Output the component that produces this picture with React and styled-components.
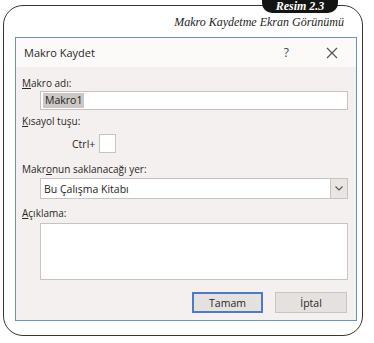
import React from "react";
import styled, { createGlobalStyle } from "styled-components";

const Global = createGlobalStyle`
  html, body { margin: 0; padding: 0; background: #ffffff; }
  body { width: 374px; height: 343px; overflow: hidden; }
  * { box-sizing: border-box; }
`;

const Page = styled.div`
  width: 374px;
  height: 343px;
  padding: 5px 0 0 3px;
  background: #ffffff;
`;

const Frame = styled.div`
  position: relative;
  width: 360px;
  height: 331px;
  border: 1.3px solid #363636;
  border-radius: 20px;
  padding-top: 9px;
`;

const Badge = styled.div`
  position: absolute;
  top: -17px;
  left: 258px;
  width: 76px;
  height: 24px;
  border-radius: 0 0 10px 10px;
  background: #141414;
  color: #ffffff;
  display: flex;
  align-items: flex-end;
  justify-content: center;
  padding-bottom: 1px;
  font-family: "Liberation Serif", serif;
  font-style: italic;
  font-weight: bold;
  font-size: 12px;
  line-height: 11px;
`;

const Caption = styled.div`
  height: 14px;
  line-height: 14px;
  text-align: right;
  padding-right: 18px;
  font-family: "Liberation Serif", serif;
  font-style: italic;
  font-size: 12px;
  color: #1e1e1e;
`;

const Dialog = styled.div`
  margin: 8px 0 0 11px;
  width: 342px;
  border: 1px solid #6a92cf;
  background: #f3f0ef;
  font-family: "Open Sans", "Noto Sans", sans-serif;
  color: #2b2725;
`;

const TitleBar = styled.div`
  height: 29px;
  background: #fbfaf9;
  display: flex;
  align-items: center;
  padding-left: 8px;
`;

const Title = styled.div`
  font-size: 11px;
  flex: 1;
`;

const Help = styled.div`
  font-size: 12px;
  margin-right: 37px;
  color: #444;
`;

const CloseIcon = styled.svg`
  width: 12px;
  height: 12px;
  margin-right: 18px;
  display: block;
`;

const Body = styled.div`
  padding: 0 8px 7px 6px;
`;

const Label = styled.div`
  font-size: 10px;
  line-height: 14px;
  height: 14px;
  margin-top: ${(p) => p.$mt}px;
  white-space: nowrap;
`;

const Key = styled.span`
  text-decoration: underline;
  text-underline-offset: 1px;
`;

const Field = styled.div`
  margin: ${(p) => p.$mt}px 0 0 18px;
  height: ${(p) => p.$h}px;
  border: 1px solid #c8c3c0;
  background: #ffffff;
  display: flex;
  align-items: ${(p) => (p.$top ? "flex-start" : "center")};
  font-size: 10.5px;
  color: #262321;
`;

const Selected = styled.span`
  margin-left: 2px;
  padding: 0 2px;
  background: #cbc8c6;
  line-height: 15px;
`;

const FieldText = styled.span`
  flex: 1;
  padding-left: 3px;
`;

const DropButton = styled.div`
  width: 17px;
  align-self: stretch;
  border-left: 1px solid #c8c3c0;
  background: #e8e5e3;
  display: flex;
  align-items: center;
  justify-content: center;
`;

const CtrlRow = styled.div`
  margin-top: 6px;
  padding-left: 50px;
  display: flex;
  align-items: center;
  font-size: 10.5px;
`;

const KeyBox = styled.div`
  margin-left: 4px;
  width: 17px;
  height: 19px;
  border: 1px solid #c8c3c0;
  background: #ffffff;
`;

const Buttons = styled.div`
  margin-top: 12px;
  display: flex;
  justify-content: flex-end;
  gap: 12px;
  padding-right: 1px;
`;

const Button = styled.div`
  width: ${(p) => p.$w}px;
  height: 21px;
  background: #e5e1df;
  border: ${(p) => (p.$primary ? "2px solid #4f79c3" : "1px solid #cac5c2")};
  display: flex;
  align-items: center;
  justify-content: center;
  font-size: 10.5px;
  color: #2b2725;
`;

export default function App() {
  return (
    <Page>
      <Global />
      <Frame>
        <Badge>Resim 2.3</Badge>
        <Caption>Makro Kaydetme Ekran Görünümü</Caption>
        <Dialog>
          <TitleBar>
            <Title>Makro Kaydet</Title>
            <Help>?</Help>
            <CloseIcon viewBox="0 0 12 12">
              <path d="M1 1 L11 11 M11 1 L1 11" stroke="#555" strokeWidth="1.2" fill="none" />
            </CloseIcon>
          </TitleBar>
          <Body>
            <Label $mt={9}>
              <Key>M</Key>akro adı:
            </Label>
            <Field $mt={1} $h={19}>
              <Selected>Makro1</Selected>
            </Field>
            <Label $mt={4}>
              <Key>K</Key>ısayol tuşu:
            </Label>
            <CtrlRow>
              <span>Ctrl+</span>
              <KeyBox />
            </CtrlRow>
            <Label $mt={9}>
              Makr<Key>o</Key>nun saklanacağı yer:
            </Label>
            <Field $mt={2} $h={21}>
              <FieldText>Bu Çalışma Kitabı</FieldText>
              <DropButton>
                <svg width="8" height="5" viewBox="0 0 8 5">
                  <path d="M0.5 0.5 L4 4 L7.5 0.5" stroke="#555" strokeWidth="1.1" fill="none" />
                </svg>
              </DropButton>
            </Field>
            <Label $mt={7}>
              <Key>A</Key>çıklama:
            </Label>
            <Field $mt={3} $h={57} $top />
            <Buttons>
              <Button $w={71} $primary>Tamam</Button>
              <Button $w={72}>İptal</Button>
            </Buttons>
          </Body>
        </Dialog>
      </Frame>
    </Page>
  );
}
